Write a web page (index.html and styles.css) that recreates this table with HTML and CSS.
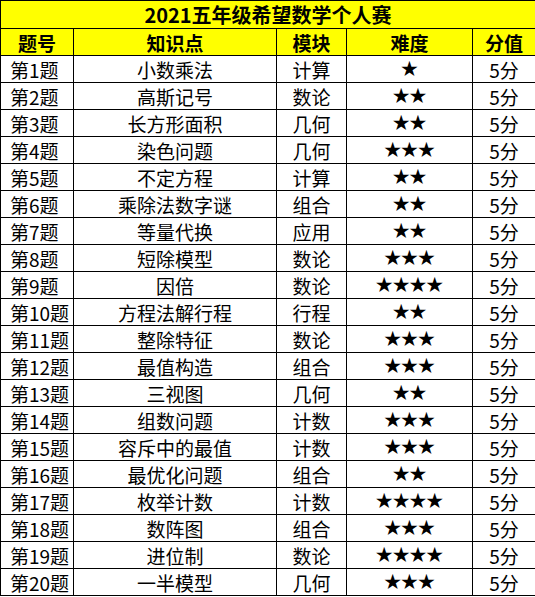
FILE: index.html
```html
<!DOCTYPE html>
<html lang="zh">
<head>
<meta charset="utf-8">
<link rel="stylesheet" href="styles.css">
</head>
<body>
<table class="sheet">
  <colgroup>
    <col class="c1"><col class="c2"><col class="c3"><col class="c4"><col class="c5">
  </colgroup>
  <thead>
    <tr class="title"><th colspan="5">2021五年级希望数学个人赛</th></tr>
    <tr class="head"><th>题号</th><th>知识点</th><th>模块</th><th>难度</th><th>分值</th></tr>
  </thead>
  <tbody>
    <tr><td>第1题</td><td>小数乘法</td><td>计算</td><td class="stars">★</td><td>5分</td></tr>
    <tr><td>第2题</td><td>高斯记号</td><td>数论</td><td class="stars">★★</td><td>5分</td></tr>
    <tr><td>第3题</td><td>长方形面积</td><td>几何</td><td class="stars">★★</td><td>5分</td></tr>
    <tr><td>第4题</td><td>染色问题</td><td>几何</td><td class="stars">★★★</td><td>5分</td></tr>
    <tr><td>第5题</td><td>不定方程</td><td>计算</td><td class="stars">★★</td><td>5分</td></tr>
    <tr><td>第6题</td><td>乘除法数字谜</td><td>组合</td><td class="stars">★★</td><td>5分</td></tr>
    <tr><td>第7题</td><td>等量代换</td><td>应用</td><td class="stars">★★</td><td>5分</td></tr>
    <tr><td>第8题</td><td>短除模型</td><td>数论</td><td class="stars">★★★</td><td>5分</td></tr>
    <tr><td>第9题</td><td>因倍</td><td>数论</td><td class="stars">★★★★</td><td>5分</td></tr>
    <tr><td>第10题</td><td>方程法解行程</td><td>行程</td><td class="stars">★★</td><td>5分</td></tr>
    <tr><td>第11题</td><td>整除特征</td><td>数论</td><td class="stars">★★★</td><td>5分</td></tr>
    <tr><td>第12题</td><td>最值构造</td><td>组合</td><td class="stars">★★★</td><td>5分</td></tr>
    <tr><td>第13题</td><td>三视图</td><td>几何</td><td class="stars">★★</td><td>5分</td></tr>
    <tr><td>第14题</td><td>组数问题</td><td>计数</td><td class="stars">★★★</td><td>5分</td></tr>
    <tr><td>第15题</td><td>容斥中的最值</td><td>计数</td><td class="stars">★★★</td><td>5分</td></tr>
    <tr><td>第16题</td><td>最优化问题</td><td>组合</td><td class="stars">★★</td><td>5分</td></tr>
    <tr><td>第17题</td><td>枚举计数</td><td>计数</td><td class="stars">★★★★</td><td>5分</td></tr>
    <tr><td>第18题</td><td>数阵图</td><td>组合</td><td class="stars">★★★</td><td>5分</td></tr>
    <tr><td>第19题</td><td>进位制</td><td>数论</td><td class="stars">★★★★</td><td>5分</td></tr>
    <tr><td>第20题</td><td>一半模型</td><td>几何</td><td class="stars">★★★</td><td>5分</td></tr>
  </tbody>
</table>
</body>
</html>
```
FILE: styles.css
```css
html, body {
  margin: 0;
  padding: 0;
  background: #ffffff;
}
.sheet {
  border-collapse: collapse;
  table-layout: fixed;
  width: 535px;
  font-family: "Noto Sans CJK SC", "Noto Sans", sans-serif;
  color: #000;
}
.c1 { width: 73px; }
.c2 { width: 203px; }
.c3 { width: 70px; }
.c4 { width: 126px; }
.c5 { width: 63px; }
.sheet th, .sheet td {
  border: 1px solid #000;
  padding: 0;
  text-align: center;
  vertical-align: middle;
  line-height: 1;
  white-space: nowrap;
  overflow: hidden;
}
.sheet td {
  height: 26px;
  font-size: 19px;
  font-weight: 400;
}
.sheet td:first-child {
  text-align: left;
  padding-left: 9px;
}
.title th {
  height: 27px;
  background: #ffff00;
  font-size: 20px;
  font-weight: 700;
}
.head th {
  height: 26px;
  background: #ffff00;
  font-size: 19px;
  font-weight: 700;
}
.sheet td.stars {
  font-family: "DejaVu Sans", sans-serif;
  font-size: 21px;
  letter-spacing: -2px;
  text-indent: -2px;
}
```
